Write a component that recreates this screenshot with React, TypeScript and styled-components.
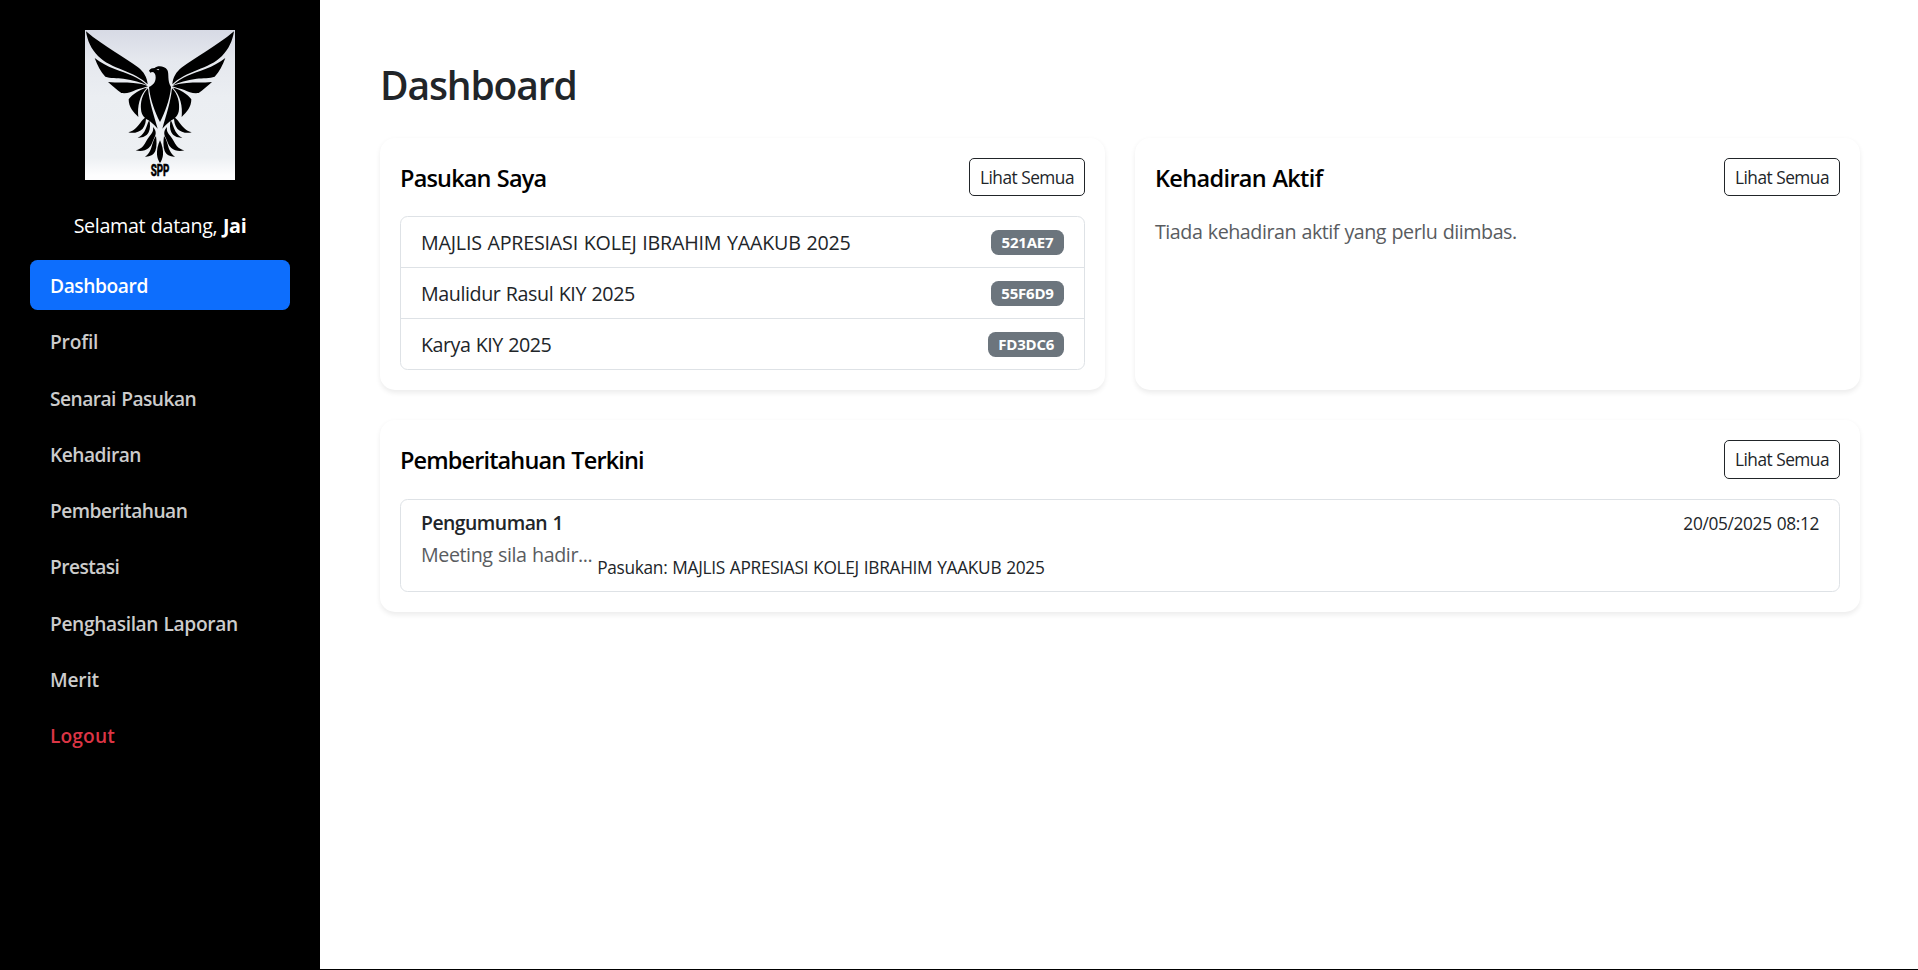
import React from "react";
import styled, { createGlobalStyle } from "styled-components";

const GlobalStyle = createGlobalStyle`
  *, *::before, *::after { box-sizing: border-box; }
  body {
    margin: 0;
    background: #000;
    color: #212529;
    font-family: "Open Sans", "Noto Sans", sans-serif;
    font-size: 19.7px;
    word-spacing: 0.8px;
  }
`;

const Page = styled.div`
  display: flex;
  height: calc(100vh - 1px);
  background: #fff;
`;

const Sidebar = styled.aside`
  flex: 0 0 320px;
  display: flex;
  flex-direction: column;
  padding: 30px;
  background: #000;
  color: #fff;
`;

const Logo = styled.svg`
  display: block;
  width: 150px;
  height: 150px;
  margin: 0 auto 30px;
`;

const Text = styled.span<{ $track?: number }>`
  display: block;
  padding-top: 1px;
  line-height: 29px;
  white-space: pre;
  letter-spacing: ${(p) => p.$track ?? 0}px;
`;

const Welcome = styled(Text)`
  margin-bottom: 20px;
  text-align: center;
`;

const Strong = styled.strong`
  font-weight: 700;
`;

const Nav = styled.nav`
  display: flex;
  flex-direction: column;
  gap: 6.25px;
`;

const NavItem = styled.a<{ $active?: boolean; $danger?: boolean }>`
  padding: 10px 20px;
  border-radius: 7.5px;
  background: ${(p) => (p.$active ? "#0d6efd" : "transparent")};
  color: ${(p) => (p.$active ? "#fff" : p.$danger ? "#dc3545" : "#ccc")};
  font-size: 19.2px;
  font-weight: 600;
  text-decoration: none;
`;

const Main = styled.main`
  flex: 1;
  padding: 61px 58px 0 60px;
`;

const Title = styled.h1`
  margin: 0 0 29px;
  font-size: 39px;
  font-weight: 600;
  line-height: 48px;
  letter-spacing: -1.13px;
`;

const Cards = styled.div`
  display: grid;
  grid-template-columns: 1fr 1fr;
  gap: 30px;
`;

const Card = styled.section<{ $wide?: boolean }>`
  grid-column: ${(p) => (p.$wide ? "1 / -1" : "auto")};
  padding: 20px;
  border-radius: 15px;
  background: #fff;
  box-shadow: 0 2.5px 5px rgba(0, 0, 0, 0.075);
`;

const CardHeader = styled.header`
  display: flex;
  align-items: center;
  justify-content: space-between;
  margin-bottom: 20px;
`;

const CardTitle = styled.h2<{ $track: number }>`
  margin: 0;
  padding-top: 2px;
  color: #000;
  font-size: 23.5px;
  font-weight: 600;
  line-height: 29px;
  letter-spacing: ${(p) => p.$track}px;
`;

const OutlineButton = styled.button`
  width: 116px;
  height: 38.25px;
  padding: 2px 0 0;
  border: 1px solid #212529;
  border-radius: 5px;
  background: transparent;
  color: #212529;
  font: 400 17.3px/26px "Open Sans", "Noto Sans", sans-serif;
  letter-spacing: -0.5px;
  white-space: nowrap;
`;

const List = styled.ul`
  margin: 0;
  padding: 0;
  list-style: none;
  border: 1px solid #dee2e6;
  border-radius: 7.5px;
`;

const TeamRow = styled.li`
  display: flex;
  align-items: center;
  justify-content: space-between;
  padding: 10px 20px;

  & + & {
    border-top: 1px solid #dee2e6;
  }
`;

const Badge = styled.span`
  min-width: 73px;
  padding: 5px 9.8px;
  border-radius: 7.5px;
  background: #6c757d;
  color: #fff;
  font-size: 15px;
  font-weight: 700;
  line-height: 15px;
  letter-spacing: -0.2px;
  text-align: center;
`;

const Muted = styled(Text)`
  color: #595c5f;
`;

const Notice = styled.li`
  padding: 10px 20px;
`;

const NoticeHead = styled.div`
  display: flex;
  justify-content: space-between;
  height: 29px;
`;

const NoticeTitle = styled.h3`
  margin: 0;
  font-size: 19.4px;
  font-weight: 600;
  line-height: 26px;
  letter-spacing: -0.52px;
`;

const Small = styled.small<{ $track: number }>`
  font-size: 17.3px;
  line-height: 28px;
  letter-spacing: ${(p) => p.$track}px;
`;

const NoticeBody = styled.div`
  display: flex;
  align-items: flex-start;
  gap: 5px;
  height: 42px;

  ${Small} {
    margin-top: 15px;
  }
`;

const wing = [
  "M48 34 C76 58 104 76 135 96 C160 112 186 128 204 142 C222 156 231 172 233 193 C216 175 186 161 158 150 C130 139 104 128 84 108 C64 88 52 62 48 34Z",
  "M74 114 C92 128 110 138 134 147 C170 161 208 171 231 196 C214 187 190 180 160 176 C142 174 120 175 106 170 C92 156 82 136 74 114Z",
  "M114 186 C142 189 166 186 190 189 C208 190 222 193 234 199 C222 204 208 206 197 210 C184 216 172 221 154 219 C140 209 128 198 114 186Z",
  "M231 203 C214 206 186 222 176 238 C176 262 190 276 205 291 C202 258 208 228 231 203Z",
  "M234 205 C216 222 211 248 213 268 C214 288 226 297 239 303 C247 309 255 318 263 326 C252 288 238 246 234 205Z",
  "M228 292 C214 300 210 313 200 322 C193 330 185 334 175 337 C190 341 208 337 218 326 C226 316 228 304 228 292Z",
  "M238 300 C231 312 230 324 223 335 C217 344 211 349 203 353 C217 354 230 349 236 337 C241 327 241 312 238 300Z",
  "M249 321 C251 334 246 340 239 348 C231 357 227 369 219 379 C213 386 206 389 197 391 C211 395 226 393 236 384 C246 375 247 364 253 353 C260 342 258 330 249 321Z",
  "M258 348 C248 362 247 378 241 391 C237 400 232 406 225 410 C238 411 251 405 256 393 C261 379 260 363 258 348Z",
];

const Wing = () => (
  <>
    {wing.map((d) => (
      <path key={d} d={d} />
    ))}
  </>
);

const EagleLogo = () => (
  <Logo viewBox="45 30 450 450">
    <defs>
      <linearGradient id="sky" x1="0" y1="0" x2="0" y2="1">
        <stop offset="0" stopColor="#d7dae5" />
        <stop offset="0.2" stopColor="#e5e8ee" />
        <stop offset="0.45" stopColor="#ebeef2" />
        <stop offset="0.85" stopColor="#edf0f3" />
        <stop offset="0.97" stopColor="#fdfdfe" />
      </linearGradient>
    </defs>
    <rect x="45" y="30" width="450" height="450" fill="url(#sky)" />
    <Wing />
    <g transform="translate(540 0) scale(-1 1)">
      <Wing />
    </g>
    <path d="M237 201 C250 196 257 186 257 172 C257 162 253 156 246 156 L241 158 L237 152 C240 146 247 144 254 144 C262 136 284 137 292 150 C298 161 291 182 303 201 C300 238 284 280 270 306 C256 280 240 238 237 201Z" />
    <path d="M259 148 L268 147 L265 151Z" fill="#e9ecf0" />
    <path d="M270 361 C263 376 260 392 261 404 C262 415 266 423 270 429 C274 423 278 415 279 404 C280 392 277 376 270 361Z" />
    <text
      x="242"
      y="468"
      fontFamily="Roboto, sans-serif"
      fontSize="47"
      fontWeight="800"
      stroke="#000"
      strokeWidth="1.5"
      textLength="56"
      lengthAdjust="spacingAndGlyphs"
    >
      SPP
    </text>
  </Logo>
);

const links = [
  { label: "Dashboard", track: -0.42, active: true },
  { label: "Profil", track: -0.2 },
  { label: "Senarai Pasukan", track: -0.54 },
  { label: "Kehadiran", track: -0.5 },
  { label: "Pemberitahuan", track: -0.53 },
  { label: "Prestasi", track: -0.58 },
  { label: "Penghasilan Laporan", track: -0.38 },
  { label: "Merit", track: -0.2 },
  { label: "Logout", track: 0.1, danger: true },
];

const teams = [
  { name: "MAJLIS APRESIASI KOLEJ IBRAHIM YAAKUB 2025", code: "521AE7", track: -0.21 },
  { name: "Maulidur Rasul KIY 2025", code: "55F6D9", track: -0.43 },
  { name: "Karya KIY 2025", code: "FD3DC6", track: -0.5 },
];

export default function App() {
  return (
    <>
      <GlobalStyle />
      <Page>
        <Sidebar>
          <EagleLogo />
          <Welcome $track={-0.33}>
            Selamat datang, <Strong>Jai</Strong>
          </Welcome>
          <Nav>
            {links.map((l) => (
              <NavItem key={l.label} $active={l.active} $danger={l.danger}>
                <Text $track={l.track}>{l.label}</Text>
              </NavItem>
            ))}
          </Nav>
        </Sidebar>
        <Main>
          <Title>Dashboard</Title>
          <Cards>
            <Card>
              <CardHeader>
                <CardTitle $track={-0.82}>Pasukan Saya</CardTitle>
                <OutlineButton>Lihat Semua</OutlineButton>
              </CardHeader>
              <List>
                {teams.map((t) => (
                  <TeamRow key={t.code}>
                    <Text $track={t.track}>{t.name}</Text>
                    <Badge>{t.code}</Badge>
                  </TeamRow>
                ))}
              </List>
            </Card>
            <Card>
              <CardHeader>
                <CardTitle $track={-0.65}>Kehadiran Aktif</CardTitle>
                <OutlineButton>Lihat Semua</OutlineButton>
              </CardHeader>
              <Muted $track={-0.475}>Tiada kehadiran aktif yang perlu diimbas.</Muted>
            </Card>
            <Card $wide>
              <CardHeader>
                <CardTitle $track={-0.87}>Pemberitahuan Terkini</CardTitle>
                <OutlineButton>Lihat Semua</OutlineButton>
              </CardHeader>
              <List>
                <Notice>
                  <NoticeHead>
                    <NoticeTitle>Pengumuman 1</NoticeTitle>
                    <Small $track={-0.34}>20/05/2025 08:12</Small>
                  </NoticeHead>
                  <NoticeBody>
                    <Muted $track={-0.43}>Meeting sila hadir...</Muted>
                    <Small $track={-0.315}>Pasukan: MAJLIS APRESIASI KOLEJ IBRAHIM YAAKUB 2025</Small>
                  </NoticeBody>
                </Notice>
              </List>
            </Card>
          </Cards>
        </Main>
      </Page>
    </>
  );
}
